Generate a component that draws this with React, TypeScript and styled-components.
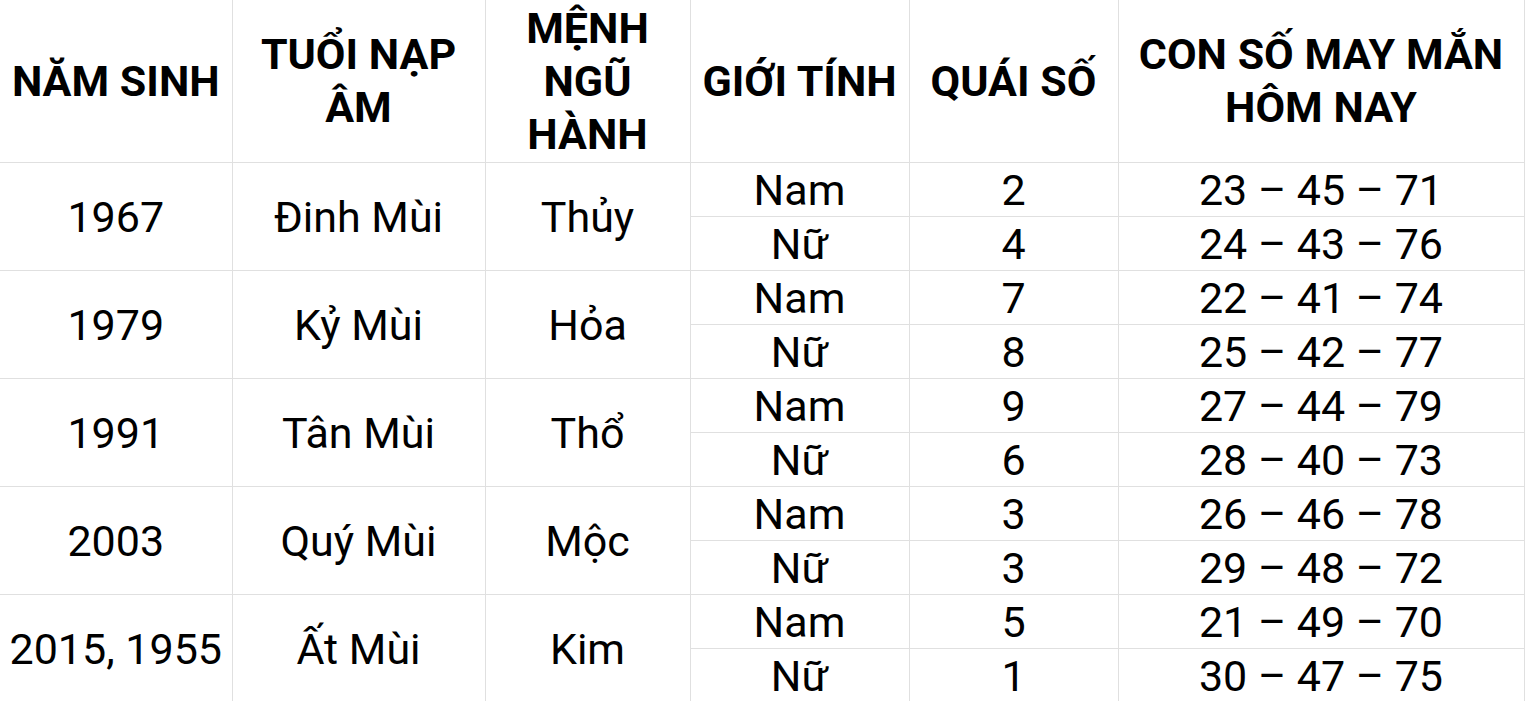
import React from "react";
import styled, { createGlobalStyle } from "styled-components";

const Global = createGlobalStyle`
  html, body { margin: 0; padding: 0; background: #ffffff; }
  body { font-family: Roboto, "Noto Sans", "Liberation Sans", sans-serif; color: #000; }
`;

const Table = styled.table`
  border-collapse: collapse;
  table-layout: fixed;
  width: 1524px;
  font-family: Roboto, "Noto Sans", "Liberation Sans", sans-serif;
  color: #000;
`;

const HeadCell = styled.th`
  height: 162px;
  padding: 0 4px;
  font-size: 43px;
  font-weight: 700;
  line-height: 53px;
  text-align: center;
  vertical-align: middle;
  border-right: 1px solid #e0e0e0;
  border-bottom: 1px solid #e0e0e0;
`;

const Cell = styled.td<{ $last?: boolean }>`
  height: 53px;
  padding: 0;
  font-size: 43px;
  font-weight: 400;
  line-height: 50px;
  text-align: center;
  vertical-align: middle;
  white-space: nowrap;
  border-right: 1px solid #e0e0e0;
  border-bottom: 1px solid ${(p) => (p.$last ? "transparent" : "#e0e0e0")};
`;

type Group = {
  year: string;
  tuoi: string;
  menh: string;
  rows: { gender: string; quai: string; nums: string }[];
};

const data: Group[] = [
  {
    year: "1967",
    tuoi: "Đinh Mùi",
    menh: "Thủy",
    rows: [
      { gender: "Nam", quai: "2", nums: "23 – 45 – 71" },
      { gender: "Nữ", quai: "4", nums: "24 – 43 – 76" },
    ],
  },
  {
    year: "1979",
    tuoi: "Kỷ Mùi",
    menh: "Hỏa",
    rows: [
      { gender: "Nam", quai: "7", nums: "22 – 41 – 74" },
      { gender: "Nữ", quai: "8", nums: "25 – 42 – 77" },
    ],
  },
  {
    year: "1991",
    tuoi: "Tân Mùi",
    menh: "Thổ",
    rows: [
      { gender: "Nam", quai: "9", nums: "27 – 44 – 79" },
      { gender: "Nữ", quai: "6", nums: "28 – 40 – 73" },
    ],
  },
  {
    year: "2003",
    tuoi: "Quý Mùi",
    menh: "Mộc",
    rows: [
      { gender: "Nam", quai: "3", nums: "26 – 46 – 78" },
      { gender: "Nữ", quai: "3", nums: "29 – 48 – 72" },
    ],
  },
  {
    year: "2015, 1955",
    tuoi: "Ất Mùi",
    menh: "Kim",
    rows: [
      { gender: "Nam", quai: "5", nums: "21 – 49 – 70" },
      { gender: "Nữ", quai: "1", nums: "30 – 47 – 75" },
    ],
  },
];

const widths = [232, 253, 205, 219, 209, 406];

export default function App() {
  return (
    <>
      <Global />
      <Table>
        <colgroup>
          {widths.map((w, i) => (
            <col key={i} style={{ width: w }} />
          ))}
        </colgroup>
        <thead>
          <tr>
            <HeadCell>NĂM SINH</HeadCell>
            <HeadCell>
              TUỔI NẠP
              <br />
              ÂM
            </HeadCell>
            <HeadCell>
              MỆNH
              <br />
              NGŨ
              <br />
              HÀNH
            </HeadCell>
            <HeadCell>GIỚI TÍNH</HeadCell>
            <HeadCell>QUÁI SỐ</HeadCell>
            <HeadCell>
              CON SỐ MAY MẮN
              <br />
              HÔM NAY
            </HeadCell>
          </tr>
        </thead>
        <tbody>
          {data.map((g, gi) =>
            g.rows.map((r, ri) => {
              const last = gi === data.length - 1 && ri === 1;
              const groupLast = gi === data.length - 1;
              return (
                <tr key={`${gi}-${ri}`}>
                  {ri === 0 && (
                    <>
                      <Cell rowSpan={2} $last={groupLast}>{g.year}</Cell>
                      <Cell rowSpan={2} $last={groupLast}>{g.tuoi}</Cell>
                      <Cell rowSpan={2} $last={groupLast}>{g.menh}</Cell>
                    </>
                  )}
                  <Cell $last={last}>{r.gender}</Cell>
                  <Cell $last={last}>{r.quai}</Cell>
                  <Cell $last={last}>{r.nums}</Cell>
                </tr>
              );
            })
          )}
        </tbody>
      </Table>
    </>
  );
}
